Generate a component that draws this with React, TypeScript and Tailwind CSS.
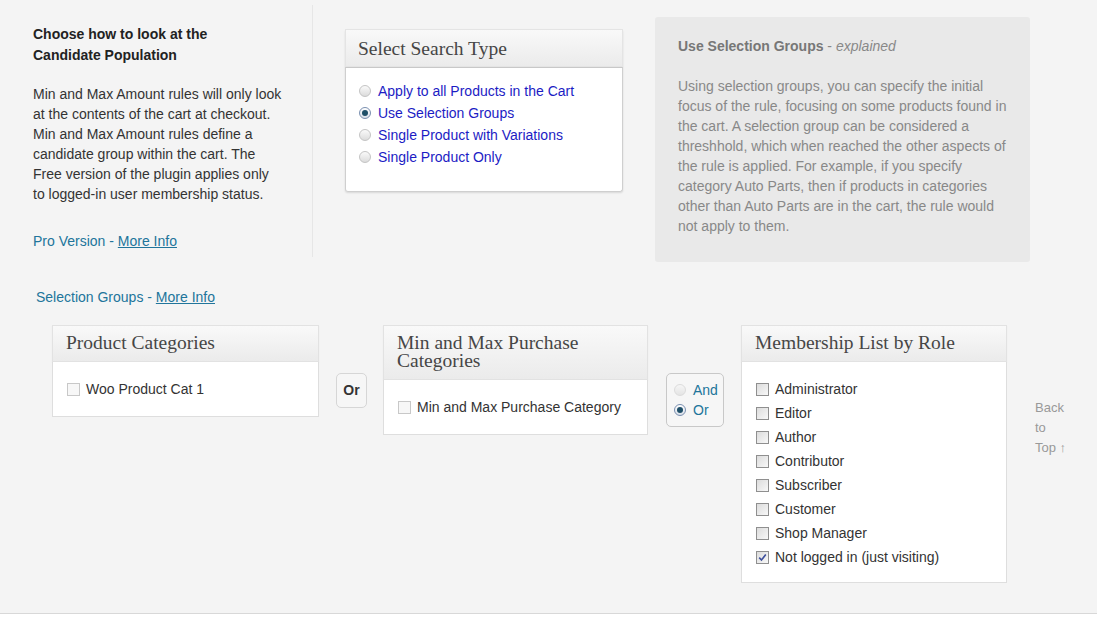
import React from "react";

const sans = "font-['Liberation_Sans',Arial,sans-serif]";
const serif = "font-['Liberation_Serif',Georgia,serif]";

function Radio({ checked, faded }: { checked?: boolean; faded?: boolean }) {
  return (
    <span
      className={
        "inline-flex h-[12px] w-[12px] shrink-0 items-center justify-center rounded-full border " +
        (checked
          ? "border-[#7a8fb0] bg-gradient-to-b from-[#ffffff] to-[#d9dfe8]"
          : faded
            ? "border-[#dcdcdc] bg-gradient-to-b from-[#f6f6f6] to-[#e4e4e4]"
            : "border-[#c4c4c4] bg-gradient-to-b from-[#fafafa] to-[#dcdcdc]")
      }
    >
      {checked && <span className="h-[6px] w-[6px] rounded-full bg-[#1f4f68]" />}
    </span>
  );
}

function Check({ checked, light }: { checked?: boolean; light?: boolean }) {
  return (
    <span
      className={
        "inline-flex h-[13px] w-[13px] shrink-0 items-center justify-center border " +
        (light
          ? "border-[#c8c8c8] bg-[#f7f7f7]"
          : "border-[#8f8f8f] bg-gradient-to-br from-[#dcdcdc] to-[#f8f8f8]")
      }
    >
      {checked && (
        <svg width="9" height="9" viewBox="0 0 9 9">
          <path d="M1.2 4.6 L3.5 7 L7.8 1.5" fill="none" stroke="#3d4f9c" strokeWidth="1.6" />
        </svg>
      )}
    </span>
  );
}

function Panel({
  title,
  width,
  children,
}: {
  title: string;
  width: string;
  children: React.ReactNode;
}) {
  return (
    <div className={width}>
      <div
        className={
          serif +
          " border border-[#e2e2e2] bg-gradient-to-b from-[#f9f9f9] to-[#ebebeb] px-[13px] pb-[7px] pt-[6px] text-[19.5px] leading-[18px] text-[#464646] shadow-[0_1px_1px_rgba(0,0,0,0.06)]"
        }
      >
        <div className="py-[2px]">{title}</div>
      </div>
      <div className="border border-t-0 border-[#dedede] bg-white">{children}</div>
    </div>
  );
}

export default function App() {
  const roles = [
    "Administrator",
    "Editor",
    "Author",
    "Contributor",
    "Subscriber",
    "Customer",
    "Shop Manager",
    "Not logged in (just visiting)",
  ];

  return (
    <div className={sans + " h-[614px] border-b border-[#d8d8d8] bg-[#f4f4f4] text-[14px] text-[#333]"}>
      {/* top row */}
      <div className="flex items-start">
        <div className="mt-[5px] w-[313px] border-r border-[#e6e6e6] pb-[6px] pl-[33px] pr-[30px] pt-[19px]">
          <h3 className="text-[14px] font-bold leading-[21px] text-[#222]">
            Choose how to look at the
            <br />
            Candidate Population
          </h3>
          <p className="mt-[18px] leading-[20px] text-[#333]">
            Min and Max Amount rules will only look at the contents of the cart at checkout. Min and Max Amount rules
            define a candidate group within the cart. The Free version of the plugin applies only to logged-in user
            membership status.
          </p>
          <p className="mt-[27px] leading-[20px] text-[#21759b]">
            Pro Version - <span className="underline">More Info</span>
          </p>
        </div>

        <div className="ml-[32px] mt-[29px] w-[278px] rounded-[3px] shadow-[0_1px_2px_rgba(0,0,0,0.12)]">
          <div
            className={
              serif +
              " border border-[#e4e4e4] bg-gradient-to-b from-[#f9f9f9] to-[#ebebeb] px-[12px] pb-[7px] pt-[8px] text-[19.5px] leading-[21px] text-[#464646]"
            }
          >
            Select Search Type
          </div>
          <div className="rounded-b-[3px] border border-t-[#c8c8c8] border-[#cfcfcf] bg-white pb-[23px] pl-[13px] pt-[12px]">
            {[
              "Apply to all Products in the Cart",
              "Use Selection Groups",
              "Single Product with Variations",
              "Single Product Only",
            ].map((t, i) => (
              <label key={t} className="flex h-[22px] items-center gap-[7px] text-[#1c1cc4]">
                <Radio checked={i === 1} />
                <span>{t}</span>
              </label>
            ))}
          </div>
        </div>

        <div className="ml-[32px] mt-[17px] w-[375px] rounded-[3px] bg-[#e9e9e9] pb-[26px] pl-[23px] pr-[20px] pt-[19px] text-[#888]">
          <p className="leading-[20px]">
            <span className="font-bold text-[#777]">Use Selection Groups</span>
            <span className="text-[#888]"> - </span>
            <em>explained</em>
          </p>
          <p className="mt-[20px] leading-[20px]">
            Using selection groups, you can specify the initial focus of the rule, focusing on some products found in
            the cart. A selection group can be considered a threshhold, which when reached the other aspects of the
            rule is applied. For example, if you specify category Auto Parts, then if products in categories other
            than Auto Parts are in the cart, the rule would not apply to them.
          </p>
        </div>
      </div>

      {/* selection groups */}
      <p className="ml-[36px] mt-[25px] leading-[20px] text-[#21759b]">
        Selection Groups - <span className="underline">More Info</span>
      </p>

      <div className="ml-[52px] mt-[18px] flex items-start">
        <Panel title="Product Categories" width="w-[267px]">
          <div className="flex h-[54px] items-center gap-[6px] pl-[14px] text-[#333]">
            <Check light />
            <span>Woo Product Cat 1</span>
          </div>
        </Panel>

        <div className="ml-[17px] mt-[48px] flex h-[35px] w-[31px] items-center justify-center rounded-[5px] border border-[#d6d6d6] bg-[#f6f6f6] font-bold text-[#333]">
          Or
        </div>

        <div className="ml-[16px]">
          <Panel title="Min and Max Purchase Categories" width="w-[265px]">
            <div className="flex h-[54px] items-center gap-[6px] pl-[14px] text-[#333]">
              <Check light />
              <span>Min and Max Purchase Category</span>
            </div>
          </Panel>
        </div>

        <div className="ml-[18px] mt-[48px] flex h-[54px] w-[58px] flex-col justify-center rounded-[5px] border border-[#c8c8c8] bg-[#f6f6f6] pl-[7px] text-[#21759b]">
          <label className="flex h-[20px] items-center gap-[7px]">
            <Radio faded />
            <span>And</span>
          </label>
          <label className="flex h-[20px] items-center gap-[7px]">
            <Radio checked />
            <span>Or</span>
          </label>
        </div>

        <div className="ml-[17px]">
          <Panel title="Membership List by Role" width="w-[266px]">
            <div className="pb-[13px] pl-[14px] pt-[15px]">
              {roles.map((r, i) => (
                <label key={r} className="flex h-[24px] items-center gap-[6px] text-[#333]">
                  <Check checked={i === roles.length - 1} />
                  <span>{r}</span>
                </label>
              ))}
            </div>
          </Panel>
        </div>

        <div className="ml-[28px] mt-[73px] text-[13px] leading-[20px] text-[#999]">
          Back
          <br />
          to
          <br />
          Top ↑
        </div>
      </div>
    </div>
  );
}
